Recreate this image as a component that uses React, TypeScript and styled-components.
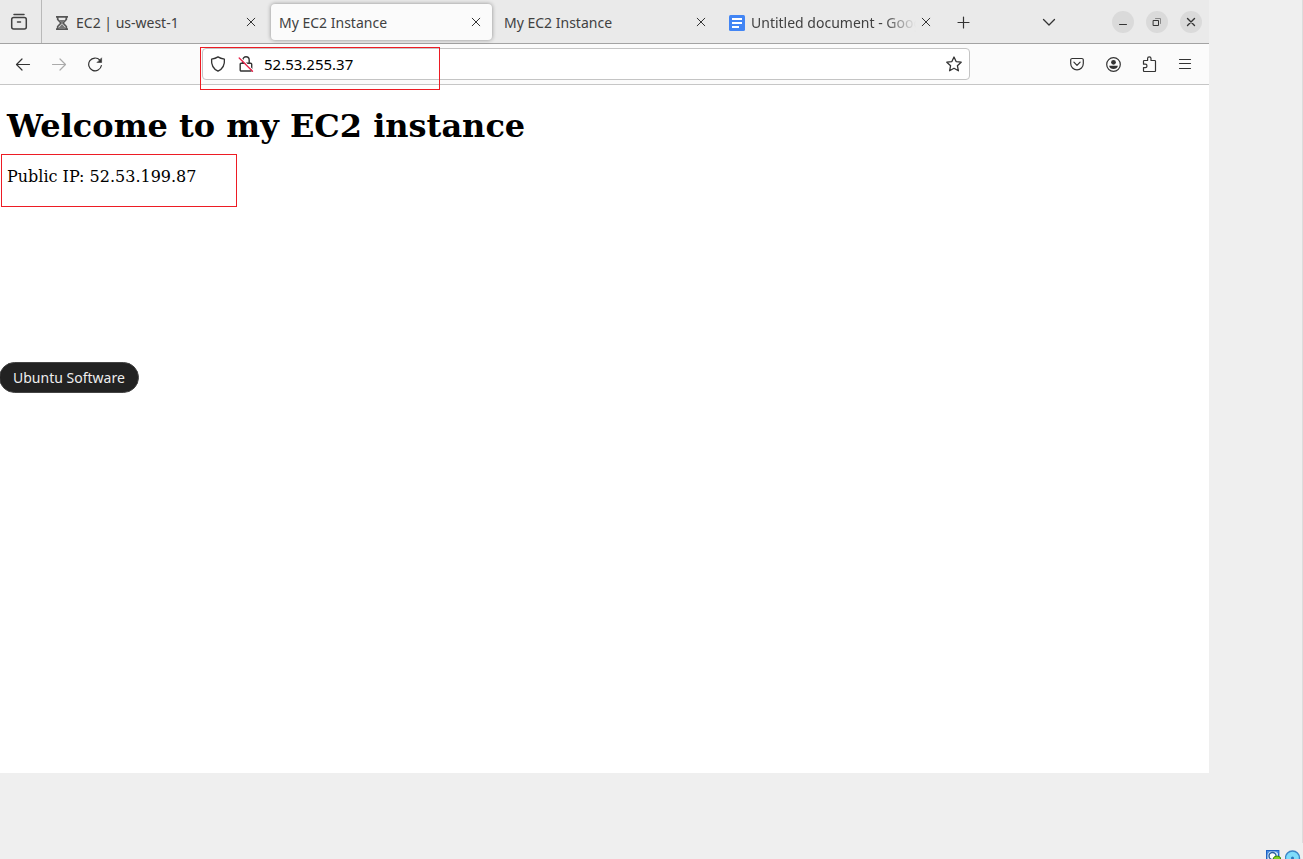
import React from "react";
import styled, { createGlobalStyle } from "styled-components";

const GlobalStyle = createGlobalStyle`
  * { box-sizing: border-box; }
  body {
    margin: 0;
    background: #efefef;
    font-family: "Noto Sans", "Open Sans", sans-serif;
    font-size: 14px;
    color: #414141;
  }
  button {
    font: inherit;
    color: inherit;
    border: 0;
    padding: 0;
    background: transparent;
  }
  svg { display: block; flex: none; }
`;

const Desktop = styled.div`
  display: flex;
  flex-direction: column;
  min-height: 100vh;
  position: relative;
  overflow: hidden;
`;

const EdgeLine = styled.div`
  position: absolute;
  top: 0;
  right: 0;
  bottom: 16px;
  width: 1px;
  background: #dcdcdc;
`;

const BrowserWindow = styled.div`
  flex: 1;
  display: flex;
  flex-direction: column;
  margin-right: 94px;
  background: #fff;
`;

const TabStrip = styled.header`
  display: flex;
  align-items: center;
  height: 44px;
  background: #eaeaea;
  border-bottom: 1px solid #a3a3a3;
`;

const FirefoxView = styled.button`
  align-self: stretch;
  width: 42px;
  padding-left: 10px;
  border-right: 1px solid #b9b9b9;
  margin-right: 4px;
`;

const Tabs = styled.div`
  display: flex;
  gap: 4px;
  padding-top: 1px;
`;

const Tab = styled.div<{ $active?: boolean }>`
  display: flex;
  align-items: center;
  width: 221px;
  height: 36px;
  padding: 0 6px 0 8px;
  border-radius: 4px;
  background: ${(p) => (p.$active ? "#fbfbfb" : "transparent")};
  box-shadow: ${(p) => (p.$active ? "0 0 4px rgba(0, 0, 0, 0.4)" : "none")};
`;

const TabButton = styled.button<{ $fade?: boolean }>`
  display: flex;
  align-items: center;
  gap: 6px;
  flex: 1;
  min-width: 0;
  height: 24px;
  padding-top: 1px;
  overflow: hidden;
  white-space: nowrap;
  text-align: left;
  mask-image: ${(p) => (p.$fade ? "linear-gradient(to left, transparent, #000 32px)" : "none")};
`;

const IconButton = styled.button<{ $size?: number; $dim?: boolean }>`
  display: flex;
  align-items: center;
  justify-content: center;
  flex: none;
  width: ${(p) => p.$size ?? 36}px;
  height: ${(p) => p.$size ?? 36}px;
  color: ${(p) => (p.$dim ? "#ababab" : "#333")};
`;

const Spacer = styled.div`
  flex: 1;
`;

const WindowControls = styled.div`
  display: flex;
  gap: 12px;
  padding-top: 1px;
  margin: 0 7px 0 45px;
`;

const WindowButton = styled(IconButton)`
  border-radius: 50%;
  background: #dadada;
`;

const Toolbar = styled.nav`
  display: flex;
  align-items: center;
  height: 41px;
  padding: 0 6px 0 5px;
  background: #fbfbfb;
  border-bottom: 1px solid #c6c6c6;
`;

const AddressBar = styled.div`
  position: relative;
  display: flex;
  align-items: center;
  flex: 1;
  height: 32px;
  margin: 0 89px;
  padding: 0 1px;
  background: #fff;
  border: 1px solid #c4c4c4;
  border-radius: 4px;
`;

const AddressInput = styled.input`
  flex: 1;
  min-width: 0;
  margin-left: 4px;
  padding: 0;
  border: 0;
  outline: 0;
  background: transparent;
  font: inherit;
  font-size: 15px;
  color: #000;
`;

const AddressMark = styled.div`
  position: absolute;
  top: -2px;
  left: -3px;
  width: 240px;
  height: 43px;
  border: 1px solid #ed1c24;
  pointer-events: none;
`;

const Page = styled.main`
  position: relative;
  flex: 1;
  padding: 22px 7px;
  font-family: "DejaVu Serif", serif;
  color: #000;
`;

const Title = styled.h1`
  margin: 0 0 22px;
  font-size: 32px;
  line-height: 38px;
`;

const Address = styled.p`
  margin: 0;
  font-size: 16px;
  line-height: 19px;
`;

const PageMark = styled.div`
  position: absolute;
  top: 69px;
  left: 1px;
  width: 236px;
  height: 53px;
  border: 1px solid #ed1c24;
  pointer-events: none;
`;

const Tooltip = styled.div`
  position: absolute;
  top: 362px;
  left: -1px;
  height: 31px;
  padding: 0 13px;
  border: 1px solid #444;
  border-radius: 16px;
  background: #222;
  color: #eee;
  line-height: 29px;
`;

const StatusBar = styled.footer`
  display: flex;
  justify-content: flex-end;
  align-items: flex-end;
  gap: 4px;
  height: 86px;
  padding-right: 2px;
`;

type IconProps = { size?: number; width?: number; children: React.ReactNode };

const Icon = ({ size = 16, width = 1, children }: IconProps) => (
  <svg
    width={size}
    height={size}
    viewBox={`0 0 ${size} ${size}`}
    fill="none"
    stroke="currentColor"
    strokeWidth={width}
    strokeLinecap="round"
    strokeLinejoin="round"
    aria-hidden="true"
  >
    {children}
  </svg>
);

const CloseTab = () => (
  <IconButton $size={20} aria-label="Close tab">
    <Icon width={1}>
      <path d="M4.2 4.2l7.600 7.600M11.8 4.2l-7.600 7.600" />
    </Icon>
  </IconButton>
);

const Hourglass = () => (
  <svg width="16" height="16" viewBox="0 0 16 16" aria-hidden="true">
    <path
      d="M2 1.800h12M2 14.200h12M3.700 2.500v2L7 8l-3.300 3.500v2M12.300 2.500v2L9 8l3.300 3.500v2"
      fill="none"
      stroke="#555"
      strokeWidth="1.7"
    />
    <path d="M5 5h6L8 8zM8 9l3.500 4h-7z" fill="#777" />
  </svg>
);

const DocsLogo = () => (
  <svg width="16" height="16" viewBox="0 0 16 16" aria-hidden="true">
    <rect width="16" height="16" rx="1.5" fill="#4285f4" />
    <path d="M3 4h10M3 8h10M3 12h7" stroke="#fff" strokeWidth="2" />
  </svg>
);

const tabs = [
  { title: "EC2 | us-west-1", icon: <Hourglass /> },
  { title: "My EC2 Instance", active: true },
  { title: "My EC2 Instance" },
  { title: "Untitled document - Goog", icon: <DocsLogo />, fade: true },
];

export default function App() {
  return (
    <Desktop>
      <GlobalStyle />
      <BrowserWindow>
        <TabStrip>
          <FirefoxView aria-label="Firefox View">
            <Icon size={18} width={1.5}>
              <path d="M4 1.5h10" />
              <rect x="1.7" y="4.5" width="14.6" height="11.5" rx="2" />
              <path d="M7.500 9h3" />
            </Icon>
          </FirefoxView>
          <Tabs>
            {tabs.map((tab, i) => (
              <Tab key={i} $active={tab.active}>
                <TabButton $fade={tab.fade}>
                  {tab.icon}
                  <span>{tab.title}</span>
                </TabButton>
                <CloseTab />
              </Tab>
            ))}
          </Tabs>
          <IconButton $size={42} aria-label="New tab">
            <Icon width={1.2}>
              <path d="M8.500 3v11M3 8.500h11" />
            </Icon>
          </IconButton>
          <Spacer />
          <IconButton $size={36} aria-label="List all tabs">
            <Icon width={1.3}>
              <path d="M2.5 5.5L8 11l5.5-5.5" />
            </Icon>
          </IconButton>
          <WindowControls>
            <WindowButton $size={22} aria-label="Minimize">
              <Icon>
                <path d="M4.5 10.5h7" />
              </Icon>
            </WindowButton>
            <WindowButton $size={22} aria-label="Restore">
              <Icon>
                <path d="M4.5 6.5h5v5h-5z" />
                <path d="M6.5 4.500h5v5" stroke="#888" />
              </Icon>
            </WindowButton>
            <WindowButton $size={22} aria-label="Close">
              <Icon width={1.4}>
                <path d="M4.500 4.500l7 7M11.500 4.500l-7 7" />
              </Icon>
            </WindowButton>
          </WindowControls>
        </TabStrip>

        <Toolbar>
          <IconButton aria-label="Back">
            <Icon width={1.2}>
              <path d="M14.500 8.500h-13M7 3L1.500 8.500 7 14" />
            </Icon>
          </IconButton>
          <IconButton $dim aria-label="Forward">
            <Icon width={1.2}>
              <path d="M1.500 8.500h13M9 3l5.500 5.500L9 14" />
            </Icon>
          </IconButton>
          <IconButton aria-label="Reload">
            <Icon width={1.2}>
              <path d="M12.900 4.200A6.400 6.400 0 1 0 14.400 9.500" />
              <path d="M14.600 2.200v4.300h-4.300z" fill="currentColor" strokeWidth="0.6" />
            </Icon>
          </IconButton>
          <AddressBar>
            <IconButton $size={28} aria-label="Tracking protection">
              <Icon width={1.3}>
                <path d="M8 .9c1.8 1.2 4 1.9 6.4 2.3.5 5.3-1.5 9.5-6.4 12-4.9-2.5-6.9-6.7-6.4-12C4 2.8 6.2 2.1 8 .9z" />
              </Icon>
            </IconButton>
            <IconButton $size={28} aria-label="Connection is not secure">
              <Icon width={1.4}>
                <path d="M4.800 7V4a3.200 3.200 0 0 1 6.400 0v3M3.500 7.200h9.200a1 1 0 0 1 1 1V14a1 1 0 0 1-1 1H3.200a1 1 0 0 1-1-1V8.200a1 1 0 0 1 1-1z" />
                <path d="M2.200 1.500l13 13" stroke="#fff" strokeWidth="1.2" />
                <path d="M1.200 2l13.300 13.300" stroke="#e8224a" strokeWidth="1.3" />
              </Icon>
            </IconButton>
            <AddressInput aria-label="Address" defaultValue="52.53.255.37" />
            <IconButton $size={28} aria-label="Bookmark this page">
              <Icon width={1.3}>
                <path d="M8 1l2.100 4.600 5.100.6-3.800 3.500 1 5.100L8 12.300l-4.400 2.500 1-5.100L.8 6.200l5.100-.6z" />
              </Icon>
            </IconButton>
            <AddressMark />
          </AddressBar>
          <IconButton aria-label="Save to Pocket">
            <Icon width={1.2}>
              <path d="M3.200 2.500h9.600a1.500 1.500 0 0 1 1.500 1.500v3.500a6.300 6.300 0 0 1-12.600 0V4a1.500 1.500 0 0 1 1.500-1.500zM4.900 6.200L8 9.300l3.100-3.100" />
            </Icon>
          </IconButton>
          <IconButton aria-label="Account">
            <Icon width={1.2}>
              <circle cx="8.500" cy="8.500" r="6.800" />
              <circle cx="8.500" cy="6.300" r="2.400" fill="currentColor" stroke="none" />
              <path d="M4.100 9.800h8.800c-.4 2.100-2.200 3.300-4.400 3.300s-4-1.200-4.400-3.300z" fill="currentColor" stroke="none" />
            </Icon>
          </IconButton>
          <IconButton aria-label="Extensions">
            <Icon width={1.2}>
              <path d="M3.300 4.500h3.300V2.600a1.700 1.700 0 0 1 3.400 0v1.900h3.700a.8.800 0 0 1 .8.800v9.400a.8.800 0 0 1-.8.800H3.300a.8.800 0 0 1-.8-.8v-3.100h1.800a1.700 1.700 0 0 0 0-3.400H2.500V5.300a.8.800 0 0 1 .8-.8z" />
            </Icon>
          </IconButton>
          <IconButton aria-label="Open menu">
            <Icon width={1.2}>
              <path d="M2.500 3.500h11M2.500 7.500h11M2.500 12.500h11" />
            </Icon>
          </IconButton>
        </Toolbar>

        <Page>
          <Title>Welcome to my EC2 instance</Title>
          <Address>Public IP: 52.53.199.87</Address>
          <PageMark />
        </Page>
      </BrowserWindow>

      <StatusBar>
        <svg width="15" height="9" viewBox="0 0 15 9" aria-hidden="true">
          <rect x=".7" y=".7" width="12" height="12" fill="#cfe6fa" stroke="#1d62c4" strokeWidth="1.4" />
          <path d="M1 1h3L1 5zM9 1h3.500v3z" fill="#4a90e2" />
          <circle cx="6.5" cy="6" r="3.5" fill="#fff" stroke="#2c5f9e" strokeWidth="1.3" />
          <circle cx="11" cy="10" r="4" fill="#7ed321" stroke="#3f8f0b" />
        </svg>
        <svg width="16" height="9" viewBox="0 0 16 9" aria-hidden="true">
          <circle cx="7.500" cy="8" r="7" fill="#7fdcfb" stroke="#3b86c8" strokeWidth="1.4" />
          <circle cx="7.500" cy="8" r="1.500" fill="#2b78bd" />
        </svg>
      </StatusBar>
      <EdgeLine />
      <Tooltip role="tooltip">Ubuntu Software</Tooltip>
    </Desktop>
  );
}
